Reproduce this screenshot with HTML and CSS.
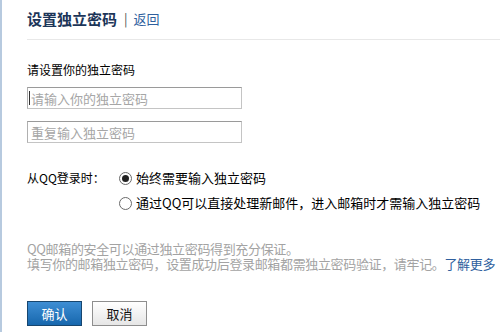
FILE: index.html
```html
<!DOCTYPE html>
<html lang="zh-CN">
<head>
<meta charset="utf-8">
<title>设置独立密码</title>
<link rel="stylesheet" href="styles.css">
</head>
<body>
<div class="page">
  <div class="header">
    <span class="title">设置独立密码</span>
    <span class="sep">|</span>
    <a class="back" href="#">返回</a>
  </div>
  <div class="form-title">请设置你的独立密码</div>
  <div class="field first"><span class="caret"></span><input class="input" type="password" placeholder="请输入你的独立密码"></div>
  <div class="field"><input class="input" type="password" placeholder="重复输入独立密码"></div>
  <div class="opts">
    <div class="opt-row">
      <span class="opt-label">从QQ登录时：</span>
      <span class="radio checked"></span>
      <span class="opt-text">始终需要输入独立密码</span>
    </div>
    <div class="opt-row">
      <span class="opt-label"></span>
      <span class="radio"></span>
      <span class="opt-text">通过QQ可以直接处理新邮件，进入邮箱时才需输入独立密码</span>
    </div>
  </div>
  <div class="note">
    <div class="note-line">QQ邮箱的安全可以通过独立密码得到充分保证。</div>
    <div class="note-line">填写你的邮箱独立密码，设置成功后登录邮箱都需独立密码验证，请牢记。<a class="more" href="#">了解更多</a></div>
  </div>
  <div class="buttons">
    <button class="btn primary">确认</button>
    <button class="btn">取消</button>
  </div>
</div>
</body>
</html>
```
FILE: styles.css
```css
* { box-sizing: border-box; }
html, body { margin: 0; padding: 0; background: #fff; }
body {
  font-family: "Noto Sans CJK SC", "Liberation Sans", sans-serif;
  font-size: 12px;
  color: #000;
}
.page {
  width: 500px;
  height: 332px;
  border-left: 2px solid #b7cadf;
  padding-left: 25px;
  overflow: hidden;
}
.header {
  height: 40px;
  border-bottom: 1px solid #e8e8e8;
  display: flex;
  align-items: center;
  padding-bottom: 1px;
}
.title {
  font-size: 15px;
  font-weight: bold;
  color: #1b3558;
  line-height: 18px;
}
.sep {
  color: #555;
  font-size: 13px;
  margin: 0 6px 0 7px;
  line-height: 18px;
}
.back {
  color: #2f5f9e;
  font-size: 13px;
  text-decoration: none;
  line-height: 18px;
}
.form-title {
  margin-top: 22px;
  line-height: 16px;
  font-size: 12px;
}
.field {
  position: relative;
  width: 215px;
  height: 22px;
  margin-top: 12px;
}
.field.first { margin-top: 9px; }
.input {
  display: block;
  width: 215px;
  height: 22px;
  border: 1px solid #c4c4c4;
  border-top-color: #9a9a9a;
  border-left-color: #b0b0b0;
  padding: 0 3px;
  font-family: "Noto Sans CJK SC", "Liberation Sans", sans-serif;
  font-size: 13px;
  outline: none;
  background: #fff;
}
.input::placeholder { color: #a6a6a6; }
.caret {
  position: absolute;
  left: 2px;
  top: 4px;
  width: 1px;
  height: 14px;
  background: #333;
}
.opts { margin-top: 25px; }
.opt-row {
  display: flex;
  align-items: center;
  height: 20px;
  line-height: 20px;
  margin-bottom: 5px;
}
.opt-label {
  width: 92px;
  font-size: 12px;
}
.radio {
  width: 13px;
  height: 13px;
  border: 1px solid #6a6a6a;
  border-radius: 50%;
  background: #fff;
  display: flex;
  align-items: center;
  justify-content: center;
  margin-right: 4px;
}
.radio.checked::after {
  content: "";
  width: 7px;
  height: 7px;
  border-radius: 50%;
  background: #222;
}
.opt-text { font-size: 13px; white-space: nowrap; }
.note {
  margin-top: 28px;
  color: #a3a3a3;
  font-size: 13px;
  line-height: 15px;
  letter-spacing: -0.35px;
  width: 480px;
}
.note-line { white-space: nowrap; height: 15px; }
.more {
  color: #2f5f9e;
  text-decoration: none;
}
.buttons {
  display: flex;
  gap: 10px;
  margin-top: 30px;
}
.btn {
  width: 55px;
  height: 25px;
  padding: 0;
  font-family: "Noto Sans CJK SC", "Liberation Sans", sans-serif;
  font-size: 13px;
  border: 1px solid #8e8e8e;
  background: linear-gradient(#ffffff, #e6e6e6);
  color: #111;
}
.btn.primary {
  border-color: #17466f;
  background: linear-gradient(#3e8ed4, #1767ad);
  color: #fff;
}
```
